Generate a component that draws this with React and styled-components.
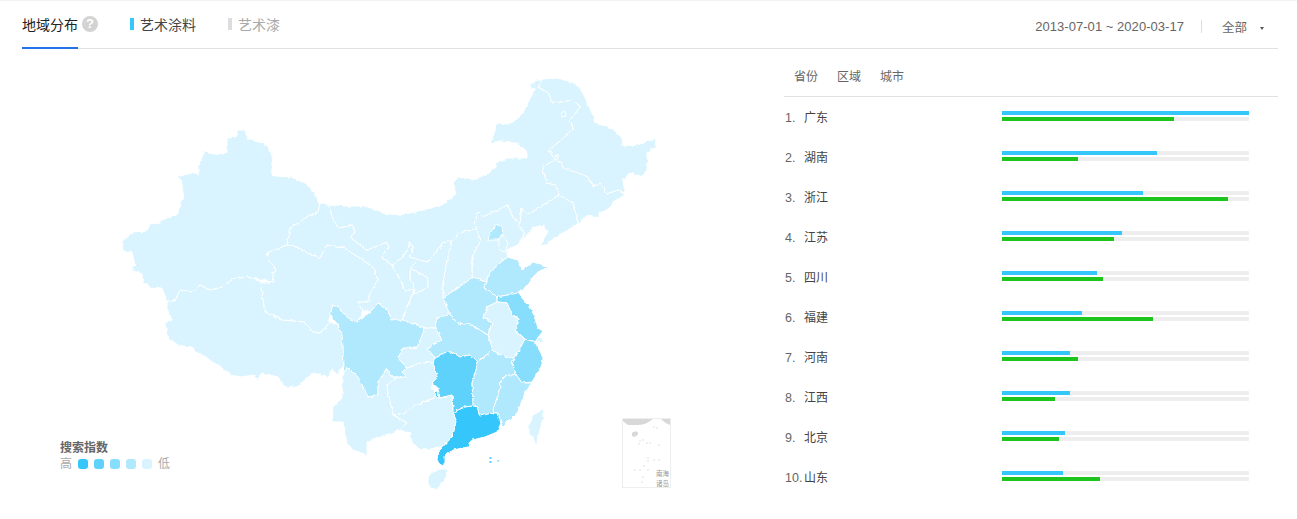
import React from "react";
import styled, { createGlobalStyle } from "styled-components";

const BLUE = "#35c6fb";
const GREEN = "#1fc41f";
const LEVELS = ["#35c6fb", "#5fd2fb", "#87ddfc", "#b0e8fd", "#d9f4fe"];

// outlines use page coordinates, the svg viewBox lines them up with the page
const PROVINCES = [
    { name: "新疆", level: 4, pts: "237,130 245,130 248,138 258,142 267,145 273,157 271,170 273,176 293,177 310,187 320,203 318,212 308,216 300,223 290,228 287,245 267,253 270,262 276,270 272,273 274,282 260,280 248,277 233,279 222,287 210,290 200,285 192,292 180,290 175,301 167,301 162,288 150,287 143,283 142,274 130,269 135,265 132,252 123,251 122,242 133,232 147,231 150,224 158,223 178,213 180,203 184,199 181,180 177,177 192,173 199,175 198,168 204,152 220,155 227,152 227,139 237,136" },
    { name: "西藏", level: 4, pts: "167,301 175,301 180,290 192,292 200,285 210,290 222,287 233,279 248,277 260,281 262,293 265,312 283,320 305,322 313,332 320,333 330,322 338,325 342,335 343,347 344,365 338,375 332,370 328,377 313,373 297,387 285,387 278,377 262,373 256,382 255,375 240,377 230,375 222,368 210,360 190,347 178,345 168,338 165,323 172,320 167,310" },
    { name: "青海", level: 4, pts: "287,245 297,247 307,253 320,257 327,245 337,247 343,247 352,253 363,260 373,267 378,280 370,293 368,302 358,302 363,310 358,322 350,320 338,307 333,305 330,315 330,322 320,333 313,332 305,322 283,320 265,312 262,293 260,282 274,282 272,273 276,270 270,262 267,253" },
    { name: "甘肃", level: 4, pts: "320,203 328,204 333,218 338,228 353,225 355,233 350,237 360,245 367,250 387,242 388,248 382,258 392,265 398,275 405,290 415,290 412,295 403,317 403,320 392,320 388,310 378,303 370,312 363,310 358,302 368,302 370,293 378,280 373,267 363,260 352,253 343,247 337,247 327,245 320,257 307,253 297,247 287,245 290,228 300,223 308,216 318,212" },
    { name: "陇东", level: 4, pts: "410,268 428,278 428,288 412,295 415,290 410,280" },
    { name: "内蒙古", level: 4, pts: "328,204 345,206 367,206 383,213 400,215 420,211 442,205 457,193 453,183 458,177 472,180 485,175 495,168 497,163 507,158 527,158 527,153 520,146 513,142 500,141 490,143 498,123 510,124 522,115 529,100 535,90 529,85 537,80 543,80 538,88 548,92 553,103 573,100 580,107 570,120 573,128 565,137 549,150 555,160 542,167 547,183 556,185 559,195 543,205 528,215 522,208 520,223 513,218 508,205 483,217 478,212 474,225 477,228 460,233 452,240 443,243 428,262 418,260 410,257 413,247 410,243 403,257 392,265 382,258 388,248 387,242 367,250 360,245 350,237 355,233 353,225 338,228 333,218" },
    { name: "黑龙江", level: 4, pts: "543,79 557,78 575,83 583,93 592,113 595,123 612,128 622,138 623,146 637,145 656,138 655,147 648,153 647,170 642,176 630,173 623,180 625,193 618,190 607,194 600,183 593,187 588,177 578,173 563,168 562,163 555,160 549,150 565,137 573,128 570,120 580,107 573,100 553,103 548,92 538,88" },
    { name: "吉林", level: 4, pts: "555,160 562,163 563,168 578,173 588,177 593,187 600,183 607,194 618,190 625,195 613,202 608,210 599,213 599,218 588,215 578,224 573,203 559,195 556,185 547,183 542,167" },
    { name: "辽宁", level: 4, pts: "559,195 573,203 578,224 563,233 540,248 547,233 543,225 533,228 518,245 525,233 518,225 520,223 522,208 528,215 543,205" },
    { name: "河北", level: 4, pts: "478,212 483,217 508,205 513,218 520,223 518,225 525,233 518,245 507,250 507,257 490,272 487,282 472,278 472,258 480,242 477,228 474,225" },
    { name: "北京", level: 3, pts: "497,224 502,228 503,233 498,240 488,240 490,233" },
    { name: "天津", level: 4, pts: "503,235 508,243 505,252 500,250 498,242" },
    { name: "山西", level: 4, pts: "452,240 460,233 477,228 480,242 472,258 472,278 443,298 443,283 447,260" },
    { name: "陕西", level: 4, pts: "452,240 447,260 443,283 443,298 450,315 437,317 435,328 425,328 403,320 403,317 412,295 428,288 428,278 410,268 418,260 428,262 443,243" },
    { name: "宁夏", level: 4, pts: "410,243 413,247 410,257 418,260 410,268 410,280 415,290 405,290 398,275 392,265 403,257" },
    { name: "山东", level: 3, pts: "507,257 518,260 522,270 533,262 550,267 538,272 533,277 523,290 518,293 497,297 495,295 483,288 487,282 490,272" },
    { name: "河南", level: 3, pts: "443,298 472,278 487,282 483,288 495,295 497,297 497,302 487,307 483,317 492,323 488,335 472,325 457,323 450,315" },
    { name: "江苏", level: 2, pts: "497,297 518,293 532,310 538,328 543,331 535,342 525,339 515,330 519,319 512,315 507,303 497,302" },
    { name: "上海", level: 4, pts: "537,342 538,337 543,338 543,343" },
    { name: "安徽", level: 4, pts: "497,302 507,303 512,315 519,319 515,330 525,339 515,358 510,358 497,353 493,350 488,335 492,323 483,317 487,307" },
    { name: "浙江", level: 2, pts: "525,339 535,342 543,357 542,365 532,382 522,383 515,373 512,362 515,358" },
    { name: "湖北", level: 3, pts: "437,317 450,315 457,323 472,325 488,335 493,350 477,362 470,355 460,357 452,352 443,353 435,358 427,348 442,340 435,328" },
    { name: "湖南", level: 1, pts: "435,358 443,353 452,352 460,357 470,355 477,362 476,370 472,383 473,400 473,406 465,407 458,410 453,413 452,395 440,398 438,388 432,383 437,377 433,363" },
    { name: "江西", level: 3, pts: "493,350 497,353 510,358 515,358 512,362 515,373 502,378 498,395 492,413 480,416 477,407 473,406 473,400 472,383 476,370 477,362" },
    { name: "福建", level: 3, pts: "515,373 522,383 532,383 525,393 517,413 503,427 501,423 498,413 492,413 498,395 502,378" },
    { name: "广东", level: 0, pts: "453,413 458,410 465,407 473,406 477,407 480,416 492,413 498,413 501,423 497,432 485,437 472,440 468,447 453,450 445,455 445,463 441,466 437,460 438,452 452,437 455,427 456,420" },
    { name: "广西", level: 4, pts: "393,415 405,413 415,405 437,397 440,398 452,395 453,413 456,420 455,427 452,437 440,448 420,450 412,442 410,433 400,430 407,423" },
    { name: "贵州", level: 4, pts: "387,385 398,377 407,377 402,372 407,368 420,363 425,362 433,363 437,377 432,383 432,387 437,397 415,405 405,413 393,415 388,393" },
    { name: "重庆", level: 4, pts: "398,358 403,348 417,348 425,328 435,328 442,340 427,348 435,358 433,363 425,362 420,363 407,368" },
    { name: "四川", level: 3, pts: "330,315 333,305 338,307 350,320 358,322 370,312 378,303 388,310 392,320 403,320 425,328 417,348 403,348 398,358 407,368 402,372 407,377 398,377 392,377 387,368 378,382 378,395 368,397 358,377 348,367 343,373 344,365 343,347 342,335 338,325" },
    { name: "云南", level: 4, pts: "342,375 348,367 358,377 368,397 378,395 378,382 387,368 392,377 398,377 387,385 388,393 393,415 407,423 400,430 380,437 367,442 367,455 353,450 347,443 343,422 332,422 333,408 342,398" },
    { name: "海南", level: 4, pts: "428,477 432,472 440,469 448,469 447,476 443,482 437,490 431,488 428,484" },
    { name: "台湾", level: 4, pts: "533,417 540,409 544,410 543,420 540,430 536,445 533,438 529,433 529,425" },
    { name: "澳门", level: 0, pts: "435,392 438,391 439,398 436,398" },
];

const RANKS = [
    { name: "广东", blue: 247, green: 172 },
    { name: "湖南", blue: 155, green: 76 },
    { name: "浙江", blue: 141, green: 226 },
    { name: "江苏", blue: 120, green: 112 },
    { name: "四川", blue: 95, green: 101 },
    { name: "福建", blue: 80, green: 151 },
    { name: "河南", blue: 68, green: 76 },
    { name: "江西", blue: 68, green: 53 },
    { name: "北京", blue: 63, green: 57 },
    { name: "山东", blue: 61, green: 98 },
];

const ISLAND_DOTS = [
    [654, 427], [657, 428], [640, 441], [643, 440], [639, 444], [647, 443], [650, 443], [659, 445],
    [648, 458], [654, 460], [659, 460], [648, 461], [644, 466], [635, 470], [640, 470], [648, 470], [643, 477], [642, 482],
];

const GlobalStyle = createGlobalStyle`
    html, body {
        margin: 0;
        background: #fff;
        font-family: "Liberation Sans", "Noto Sans CJK SC", sans-serif;
        font-size: 12px;
        color: #666;
    }
`;

const Page = styled.div`
    width: 1297px;
    height: 519px;
    overflow: hidden;
    border-top: 1px solid #f3f3f3;
    box-sizing: border-box;
`;

const Header = styled.div`
    display: flex;
    align-items: center;
    height: 48px;
    margin: 0 19px 0 22px;
    border-bottom: 1px solid #e1e1e1;
    box-sizing: border-box;
`;

const MainTab = styled.div`
    position: relative;
    height: 47px;
    line-height: 48px;
    font-size: 14px;
    color: #222;
    &:after {
        content: "";
        position: absolute;
        left: 0;
        right: 0;
        bottom: -1px;
        height: 2px;
        background: #2272ea;
    }
`;

const HelpIcon = styled.span`
    width: 16px;
    height: 16px;
    margin: -1px 0 0 4px;
    border-radius: 50%;
    background: #d3d3d3;
    color: #fff;
    font-size: 13px;
    font-weight: bold;
    line-height: 16px;
    text-align: center;
`;

const SeriesTab = styled.div`
    display: flex;
    align-items: center;
    height: 47px;
    margin-left: 32px;
    line-height: 46px;
    font-size: 14px;
    color: ${props => props.$muted ? "#aaa" : "#444"};
    &:before {
        content: "";
        width: 4px;
        height: 12px;
        margin: -2px 6px 0 0;
        background: ${props => props.$muted ? "#ddd" : BLUE};
    }
`;

const DateRange = styled.div`
    margin: 4px 0 0 auto;
    font-size: 13px;
    letter-spacing: 0.04px;
    color: #666;
`;

const Divider = styled.span`
    width: 1px;
    height: 13px;
    margin: 4px 20px 0 17px;
    background: #ddd;
`;

const Scope = styled.div`
    margin-top: 4px;
    font-size: 12.5px;
    color: #666;
`;

const Caret = styled.span`
    width: 0;
    height: 0;
    margin: 7px 14px 0 13px;
    border-left: 2.5px solid transparent;
    border-right: 2.5px solid transparent;
    border-top: 3px solid #555;
`;

const Body = styled.div`
    display: flex;
    margin: 0 19px 0 22px;
`;

const MapPane = styled.div`
    position: relative;
    width: 762px;
    height: 470px;
    flex: none;
`;

const MapSvg = styled.svg`
    display: block;
    width: 762px;
    height: 470px;
`;

const Legend = styled.div`
    position: absolute;
    left: 38px;
    top: 391px;
`;

const LegendTitle = styled.div`
    font-size: 12px;
    font-weight: bold;
    line-height: 16px;
    color: #666;
`;

const LegendScale = styled.div`
    display: flex;
    align-items: center;
    gap: 6px;
    line-height: 16px;
    color: #aaa;
`;

const Swatch = styled.span`
    width: 10px;
    height: 10px;
    border-radius: 3px;
    background: ${props => props.$color};
`;

const RankPane = styled.div`
    flex: 1;
`;

const SubTabs = styled.div`
    display: flex;
    gap: 19px;
    height: 48px;
    padding-left: 10px;
    line-height: 56px;
    border-bottom: 1px solid #e1e1e1;
    box-sizing: border-box;
`;

const SubTab = styled.span`
    color: #666;
`;

const Row = styled.div`
    display: grid;
    grid-template-columns: 19px 198px 247px;
    align-items: baseline;
    height: 40px;
    line-height: 42px;
    padding-left: 1px;
`;

const Rank = styled.span`
    font-size: 12.5px;
    color: #666;
    white-space: nowrap;
`;

const Name = styled.span`
    color: #444;
`;

const Bars = styled.div`
    display: flex;
    flex-direction: column;
    gap: 2px;
    align-self: center;
    margin-top: -4px;
`;

const Track = styled.div`
    height: 4px;
    border-radius: 1px;
    background: #eeeeee;
`;

const Fill = styled.div`
    height: 100%;
    background: ${props => props.$color};
`;

const InsetLabel = styled.text`
    font-family: "Noto Sans CJK SC", sans-serif;
    font-size: 6.5px;
    fill: #999;
`;

const ChinaMap = () => (
    <MapSvg viewBox="22 49 762 470">
        <defs>
            {/* roughens the hand plotted outlines into a border like line */}
            <filter id="rough" filterUnits="userSpaceOnUse" x="100" y="60" width="600" height="450">
                <feTurbulence type="fractalNoise" baseFrequency="0.22" numOctaves="2" seed="4" />
                <feDisplacementMap in="SourceGraphic" scale="3.5" xChannelSelector="R" yChannelSelector="G" />
            </filter>
        </defs>
        <g filter="url(#rough)">
            {PROVINCES.map(p => (
                <polygon key={p.name} points={p.pts} fill={LEVELS[p.level]} stroke="#fff" strokeWidth="1" strokeLinejoin="round" />
            ))}
            <polygon points="561,113 565,111 566,116 562,117" fill="none" stroke="#fff" />
            <polygon points="555,156 558,154 558,158" fill="none" stroke="#fff" />
        </g>
        <rect x="489.5" y="457" width="2" height="2" fill={LEVELS[1]} />
        <rect x="489.5" y="461" width="2" height="2" fill={LEVELS[1]} />
        <rect x="497.5" y="460" width="1.4" height="1.4" fill={LEVELS[1]} />

        {/* 南海诸岛 inset */}
        <rect x="622.5" y="418.5" width="48" height="69" fill="#fff" stroke="#eeeeee" />
        <path d="M623 419H653C649 422 644 425 638 425H628C626 424 624 422 623 421Z" fill="#d8d8d8" />
        <path d="M661 419H670V425C667 424 664 422 661 419Z" fill="#d8d8d8" />
        <path d="M632 433C634 431 638 431 638 433C638 436 634 438 632 436Z" fill="#d8d8d8" />
        {ISLAND_DOTS.map(([x, y]) => (
            <circle key={`${x}-${y}`} cx={x} cy={y} r="0.8" fill="#dcdcdc" />
        ))}
        <InsetLabel x="656" y="476">南海</InsetLabel>
        <InsetLabel x="656" y="486">诸岛</InsetLabel>
    </MapSvg>
);

export default function App() {
    return (
        <Page>
            <GlobalStyle />
            <Header>
                <MainTab>地域分布</MainTab>
                <HelpIcon>?</HelpIcon>
                <SeriesTab>艺术涂料</SeriesTab>
                <SeriesTab $muted>艺术漆</SeriesTab>
                <DateRange>2013-07-01 ~ 2020-03-17</DateRange>
                <Divider />
                <Scope>全部</Scope>
                <Caret />
            </Header>
            <Body>
                <MapPane>
                    <ChinaMap />
                    <Legend>
                        <LegendTitle>搜索指数</LegendTitle>
                        <LegendScale>
                            高
                            {LEVELS.map(c => <Swatch key={c} $color={c} />)}
                            低
                        </LegendScale>
                    </Legend>
                </MapPane>
                <RankPane>
                    <SubTabs>
                        <SubTab>省份</SubTab>
                        <SubTab>区域</SubTab>
                        <SubTab>城市</SubTab>
                    </SubTabs>
                    {RANKS.map((r, i) => (
                        <Row key={r.name}>
                            <Rank>{i + 1}.</Rank>
                            <Name>{r.name}</Name>
                            <Bars>
                                <Track><Fill $color={BLUE} style={{ width: r.blue }} /></Track>
                                <Track><Fill $color={GREEN} style={{ width: r.green }} /></Track>
                            </Bars>
                        </Row>
                    ))}
                </RankPane>
            </Body>
        </Page>
    );
}
